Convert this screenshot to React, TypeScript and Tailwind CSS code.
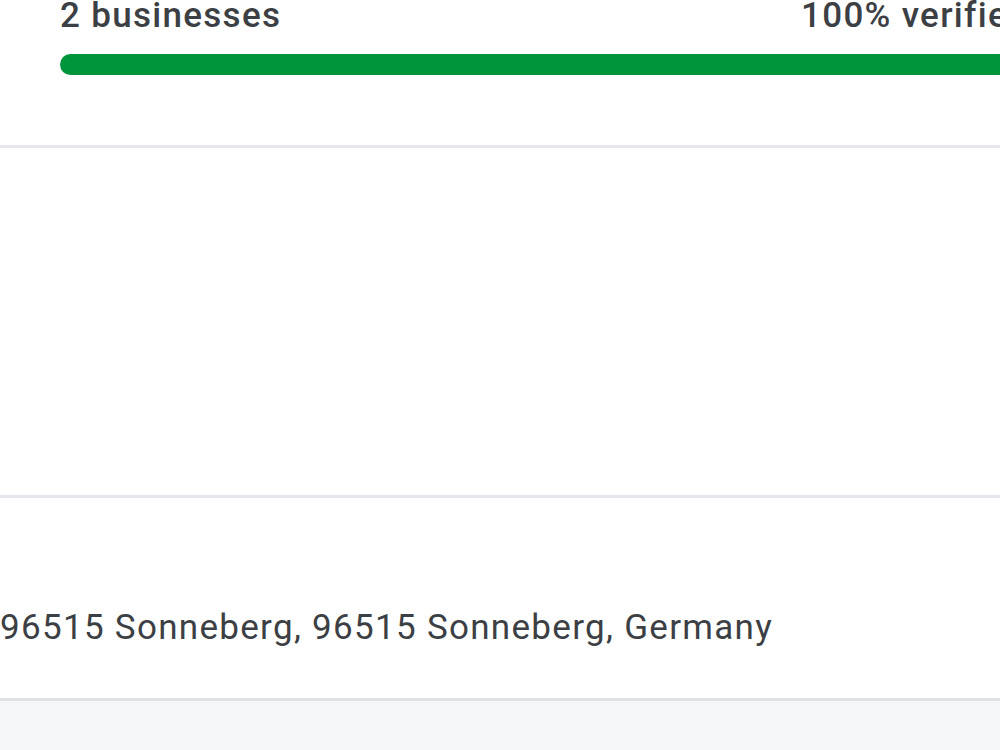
import React from "react";

export default function App() {
  return (
    <div className="w-[1000px] h-[750px] overflow-hidden bg-white" style={{ fontFamily: "Roboto, 'Noto Sans', sans-serif" }}>
      <div className="w-[1089px] flex flex-col">
        <div className="px-[60px] pb-[70px]">
          <div className="flex justify-between items-center mt-[-5px] h-[42px] text-[35px] leading-[42px] tracking-[1.3px] font-medium text-[#3c3f44]">
            <span>2 businesses</span>
            <span>100% verified</span>
          </div>
          <div className="mt-[17px] h-[21px] rounded-full bg-[#00953a]" />
        </div>
        <div className="h-[3px] bg-[#e6e6ec]" />
        <div className="h-[347px]" />
        <div className="h-[3px] bg-[#e6e6ec]" />
        <div className="pt-[109px] pb-[49px]">
          <div className="text-[35px] leading-[42px] tracking-[1.3px] text-[#3c3f44] whitespace-nowrap">
            96515 Sonneberg, 96515 Sonneberg, Germany
          </div>
        </div>
        <div className="h-[3px] bg-[#e1e2e6]" />
        <div className="h-[100px] bg-[#f6f7f9]" />
      </div>
    </div>
  );
}
